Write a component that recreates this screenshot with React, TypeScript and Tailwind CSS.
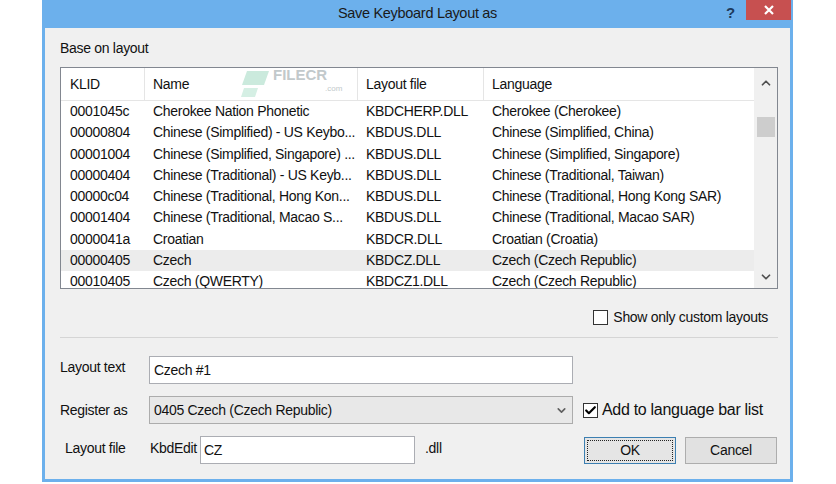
import { Check, ChevronDown, ChevronUp } from 'lucide-react'

const ROWS = [
  ['0001045c', 'Cherokee Nation Phonetic', 'KBDCHERP.DLL', 'Cherokee (Cherokee)'],
  ['00000804', 'Chinese (Simplified) - US Keybo...', 'KBDUS.DLL', 'Chinese (Simplified, China)'],
  ['00001004', 'Chinese (Simplified, Singapore) ...', 'KBDUS.DLL', 'Chinese (Simplified, Singapore)'],
  ['00000404', 'Chinese (Traditional) - US Keyb...', 'KBDUS.DLL', 'Chinese (Traditional, Taiwan)'],
  ['00000c04', 'Chinese (Traditional, Hong Kon...', 'KBDUS.DLL', 'Chinese (Traditional, Hong Kong SAR)'],
  ['00001404', 'Chinese (Traditional, Macao S...', 'KBDUS.DLL', 'Chinese (Traditional, Macao SAR)'],
  ['0000041a', 'Croatian', 'KBDCR.DLL', 'Croatian (Croatia)'],
  ['00000405', 'Czech', 'KBDCZ.DLL', 'Czech (Czech Republic)'],
  ['00010405', 'Czech (QWERTY)', 'KBDCZ1.DLL', 'Czech (Czech Republic)'],
]

const COLS = ['w-[84px] pl-[9px]', 'w-[213px] pl-[8px]', 'w-[126px] pl-[8px]', 'flex-1 pl-[8px]']
const HEADERS = ['KLID', 'Name', 'Layout file', 'Language']

// watermark that sits over the list header
function Watermark() {
  return (
    <div className="pointer-events-none absolute left-[180px] top-[-8px] h-[38px] w-[100px]">
      <svg width="36" height="38" viewBox="0 0 36 38" className="absolute left-0 top-0">
        <polygon points="9,0 33,0 30,8 6,8" fill="#d5efe4" />
        <polygon points="6,11 28,11 23,25 1,25" fill="#cbeadd" />
        <polygon points="3,28 17,28 14,37 0,37" fill="#d5efe4" />
      </svg>
      <span className="absolute left-[32px] top-[7px] text-[15px] font-bold leading-none tracking-[0px] text-[#c2c9cb]">
        FILECR
      </span>
      <span className="absolute left-[84px] top-[25px] text-[8px] leading-none tracking-[0px] text-[#c2c9cb]">.com</span>
    </div>
  )
}

function LayoutList() {
  return (
    <div className="flex h-[222px] w-[718px] overflow-hidden border border-[#828790] bg-white">
      <div className="relative flex flex-1 flex-col">
        <div className="flex h-[33px] shrink-0 items-center border-b border-[#e5e5e5]">
          {HEADERS.map((h, i) => (
            <div
              key={h}
              className={`${COLS[i]} relative flex h-full items-center ${i < 3 ? 'border-r border-[#e5e5e5]' : ''}`}
            >
              {h}
              {i === 1 && (
                <svg width="8" height="5" viewBox="0 0 8 5" className="absolute left-[104px] top-[3px]">
                  <path d="M0.5 4.5 L4 1 L7.5 4.5" fill="none" stroke="#7a7a7a" strokeWidth="1" />
                </svg>
              )}
            </div>
          ))}
          <Watermark />
        </div>
        {ROWS.map((r, idx) => (
          <div
            key={idx}
            className={`flex h-[21.25px] shrink-0 items-center ${r[0] === '00000405' ? 'bg-[#ececec]' : ''}`}
          >
            {r.map((c, i) => (
              <div key={i} className={`${COLS[i]} truncate whitespace-nowrap`}>
                {c}
              </div>
            ))}
          </div>
        ))}
      </div>
      <div className="flex w-[23px] flex-col items-center bg-[#f0f0f0]">
        <div className="flex h-[30px] items-center">
          <ChevronUp className="h-[14px] w-[14px] text-[#505050]" strokeWidth={3} />
        </div>
        <div className="mt-[19px] h-[20px] w-[18px] bg-[#cdcdcd]" />
        <div className="flex-1" />
        <div className="flex h-[22px] items-center">
          <ChevronDown className="h-[14px] w-[14px] text-[#505050]" strokeWidth={3} />
        </div>
      </div>
    </div>
  )
}

function CheckBox({ checked }: { checked?: boolean }) {
  return (
    <span className="flex h-[15px] w-[15px] shrink-0 items-center justify-center border border-[#333] bg-white">
      {checked && <Check className="h-[13px] w-[13px] text-black" strokeWidth={4} />}
    </span>
  )
}

export default function App() {
  return (
    <div
      className="h-[484px] w-[836px] overflow-hidden bg-white text-[14px] tracking-[-0.3px] text-[#111]"
      style={{ fontFamily: '"Liberation Sans", Arial, sans-serif' }}
    >
      <div className="ml-[42px] flex h-[482px] w-[751px] flex-col bg-[#6cb0ec]">
        {/* title bar */}
        <div className="relative flex h-[28px] items-center justify-center">
          <span className="text-[14.5px] text-[#1a1a1a]">Save Keyboard Layout as</span>
          <span className="absolute left-[684px] top-[2px] text-[15px] font-bold text-[#1d3a5c]">?</span>
          <div className="absolute right-[2px] top-0 flex h-[20px] w-[45px] items-center justify-center bg-[#c75050]">
            <svg width="10" height="10" viewBox="0 0 10 10">
              <path d="M1 1 L9 9 M9 1 L1 9" stroke="white" strokeWidth="2.2" />
            </svg>
          </div>
        </div>

        {/* body */}
        <div className="mx-[3px] mb-[3px] flex flex-1 flex-col bg-[#f0f0f0] pl-[15px] pr-[10px]">
          <div className="mt-[12px] h-[16px] leading-[16px]">Base on layout</div>
          <div className="mt-[11px]">
            <LayoutList />
          </div>

          <div className="mt-[18px] flex w-[718px] items-center justify-end gap-[5px] pr-[10px]">
            <CheckBox />
            <span>Show only custom layouts</span>
          </div>

          <div className="mt-[9px] h-px w-[718px] bg-[#d5d5d5]" />

          <div className="mt-[18px] flex items-center">
            <span className="mb-[6px] w-[89px] shrink-0">Layout text</span>
            <div className="flex h-[28px] w-[424px] shrink-0 items-center border border-[#abadb3] bg-white pl-[4px]">
              Czech #1
            </div>
          </div>

          <div className="mt-[12px] flex items-center">
            <span className="w-[89px] shrink-0">Register as</span>
            <div className="flex h-[28px] w-[424px] shrink-0 items-center justify-between border border-[#acacac] bg-[#e8e8e8] pl-[4px] pr-[4px]">
              <span>0405 Czech (Czech Republic)</span>
              <ChevronDown className="h-[13px] w-[13px] text-[#606060]" strokeWidth={3} />
            </div>
            <div className="ml-[10px] flex items-center gap-[4px]">
              <CheckBox checked />
              <span className="whitespace-nowrap text-[16px]">Add to language bar list</span>
            </div>
          </div>

          <div className="mt-[12px] flex items-center">
            <span className="mb-[3px] w-[89px] shrink-0 pl-[5px]">Layout file</span>
            <span className="mb-[3px] w-[51px] shrink-0 pl-[1px]">KbdEdit</span>
            <div className="flex h-[28px] w-[215px] shrink-0 items-center border border-[#abadb3] bg-white pl-[3px]">
              CZ
            </div>
            <span className="mb-[3px] ml-[10px] w-[14px] shrink-0">.dll</span>
            <div className="ml-[145px] flex h-[27px] w-[92px] shrink-0 items-center justify-center border border-[#3c7fb1] bg-[#e5e5e5] p-[2px]">
              <div className="flex h-full w-full items-center justify-center border border-dotted border-[#222]">OK</div>
            </div>
            <div className="ml-[9px] flex h-[27px] w-[92px] shrink-0 items-center justify-center border border-[#adadad] bg-[#e1e1e1]">
              Cancel
            </div>
          </div>
        </div>
      </div>
    </div>
  )
}
